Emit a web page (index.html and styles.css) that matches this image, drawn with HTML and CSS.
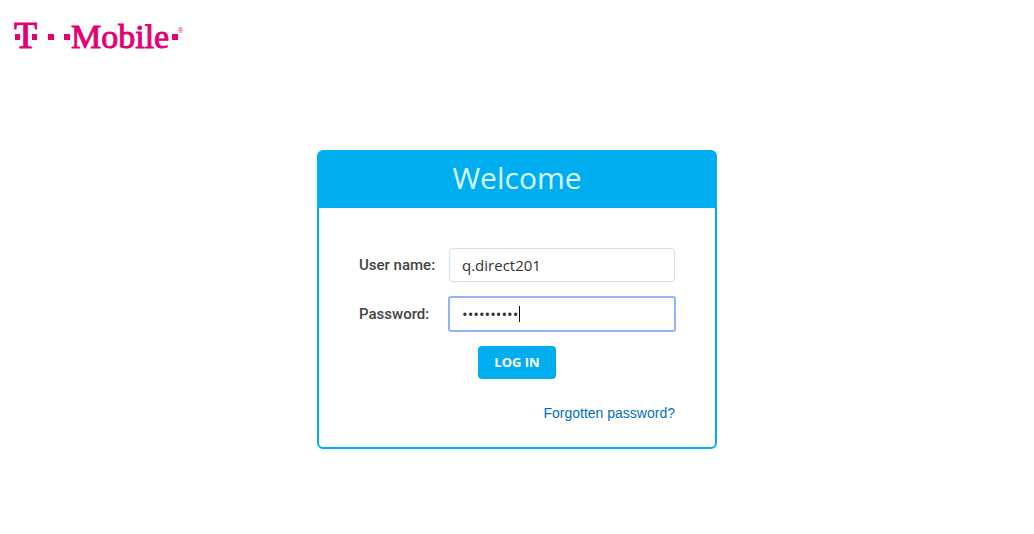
FILE: index.html
```html
<!DOCTYPE html>
<html lang="en">
<head>
<meta charset="utf-8">
<meta name="viewport" content="width=device-width, initial-scale=1">
<title>T-Mobile</title>
<link rel="stylesheet" href="styles.css">
</head>
<body>
<header class="header">
  <svg class="logo" width="180" height="50" viewBox="0 0 180 50" role="img" aria-label="T-Mobile">
    <text class="logo-t" x="4" y="38">T</text>
    <rect x="5" y="24" width="5" height="6"/>
    <rect x="22" y="24" width="5" height="6"/>
    <rect x="38" y="24" width="6" height="6"/>
    <rect x="54" y="24" width="6" height="6"/>
    <text class="logo-name" x="61" y="38">Mobile</text>
    <rect x="162" y="24" width="6" height="6"/>
    <text class="logo-mark" x="168" y="23">®</text>
  </svg>
</header>
<main class="main">
  <form class="card">
    <h1 class="title">Welcome</h1>
    <div class="body">
      <div class="row">
        <label class="label" for="user">User name:</label>
        <input class="input" id="user" type="text" value="q.direct201">
      </div>
      <div class="row">
        <label class="label" for="pass">Password:</label>
        <div class="field">
          <input class="input input-active" id="pass" type="password" value="abcdefghij">
          <span class="caret"></span>
        </div>
      </div>
      <button class="button" type="button">LOG IN</button>
      <a class="link" href="#">Forgotten password?</a>
    </div>
  </form>
</main>
</body>
</html>
```
FILE: styles.css
```css
* { box-sizing: border-box; }
body {
  margin: 0;
  background: #fff;
  color: #444;
  font-family: "Liberation Sans", Arial, sans-serif;
}
.header { padding: 10px 10px 0; }
.logo { display: block; fill: #e20074; }
.logo-t { font: 38px "Liberation Serif", serif; stroke: #e20074; stroke-width: 1px; }
.logo-name { font: 34px "Liberation Serif", serif; stroke: #e20074; stroke-width: 1px; }
.logo-mark { font: 7px "Liberation Sans", sans-serif; }
.main { padding: 90px 16px 0; }
.card {
  max-width: 400px;
  margin: 0 auto;
  border: 2px solid #00aeef;
  border-radius: 6px;
}
.title {
  margin: 0;
  padding: 6px 0 10px;
  background: #00aeef;
  color: #d5fbff;
  font: 400 30px/40px "Open Sans", sans-serif;
  text-align: center;
}
.body {
  display: flex;
  flex-direction: column;
  padding: 40px 40px 24px;
}
.row { display: flex; align-items: center; margin-bottom: 15px; }
.label { flex: 0 0 90px; font: 500 15px/20px Roboto, sans-serif; }
.input {
  flex: 1;
  min-width: 0;
  width: 100%;
  height: 34px;
  padding: 0 12px;
  border: 1px solid #ddd;
  border-radius: 4px;
  background: #fff;
  color: #333;
  font: 15px "Open Sans", sans-serif;
  outline: 0;
}
.field { position: relative; display: flex; flex: 1; }
.input-active {
  border: 1px solid #91b5f7;
  border-radius: 2px;
  box-shadow: 0 0 0 1px #91b5f7;
}
.caret {
  position: absolute;
  top: 9px;
  left: 70px;
  width: 1px;
  height: 16px;
  background: #111;
}
.button {
  align-self: center;
  height: 33px;
  padding: 0 16px 2px;
  border: 0;
  border-radius: 4px;
  background: #00aeef;
  color: #fff;
  font: bold 13px "Open Sans", sans-serif;
}
.link {
  align-self: flex-end;
  margin-top: 24px;
  color: #0071bc;
  font-size: 14px;
  line-height: 20px;
  text-decoration: none;
}
```
